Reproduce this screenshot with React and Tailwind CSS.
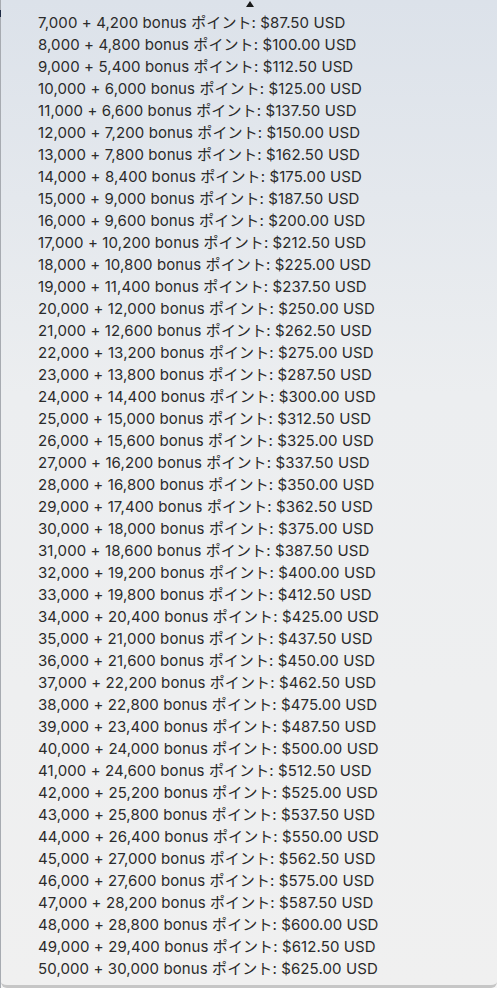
import React from "react";

const rows = [];
for (let n = 7; n <= 50; n++) {
  const pts = n * 1000;
  const bonus = n * 600;
  const price = n * 12.5;
  rows.push({ pts, bonus, price });
}

const fmt = (v) => v.toLocaleString("en-US");

const App = () => {
  return (
    <div className="flex h-[988px] w-[497px] overflow-hidden bg-[#f6f6f6]">
      <div className="flex w-[1px] flex-col bg-[#a7abb1]">
        <div className="mt-[10px] h-[7px] bg-[#1e2a44]" />
      </div>
      <div className="relative flex h-[988px] flex-1 flex-col rounded-b-[6px] border-b-[3px] border-[#c6c6c6] bg-gradient-to-b from-[#dce2ea] via-[#eceef0] via-40% to-[#f0f0f0] pt-[11px] font-['Inter','Noto_Sans_CJK_JP',sans-serif] text-[15px] tracking-[0.1px] text-[#2b2b2b]">
        <div className="absolute left-[245px] top-[1px] h-0 w-0 border-x-[4.5px] border-b-[6px] border-x-transparent border-b-[#1a1a1a]" />
        {rows.map((r) => (
          <div key={r.pts} className="flex h-[22px] items-center pl-[37px] leading-none">
            {fmt(r.pts)} + {fmt(r.bonus)} bonus ポイント: ${r.price.toFixed(2)} USD
          </div>
        ))}
      </div>
    </div>
  );
};

export default App;
